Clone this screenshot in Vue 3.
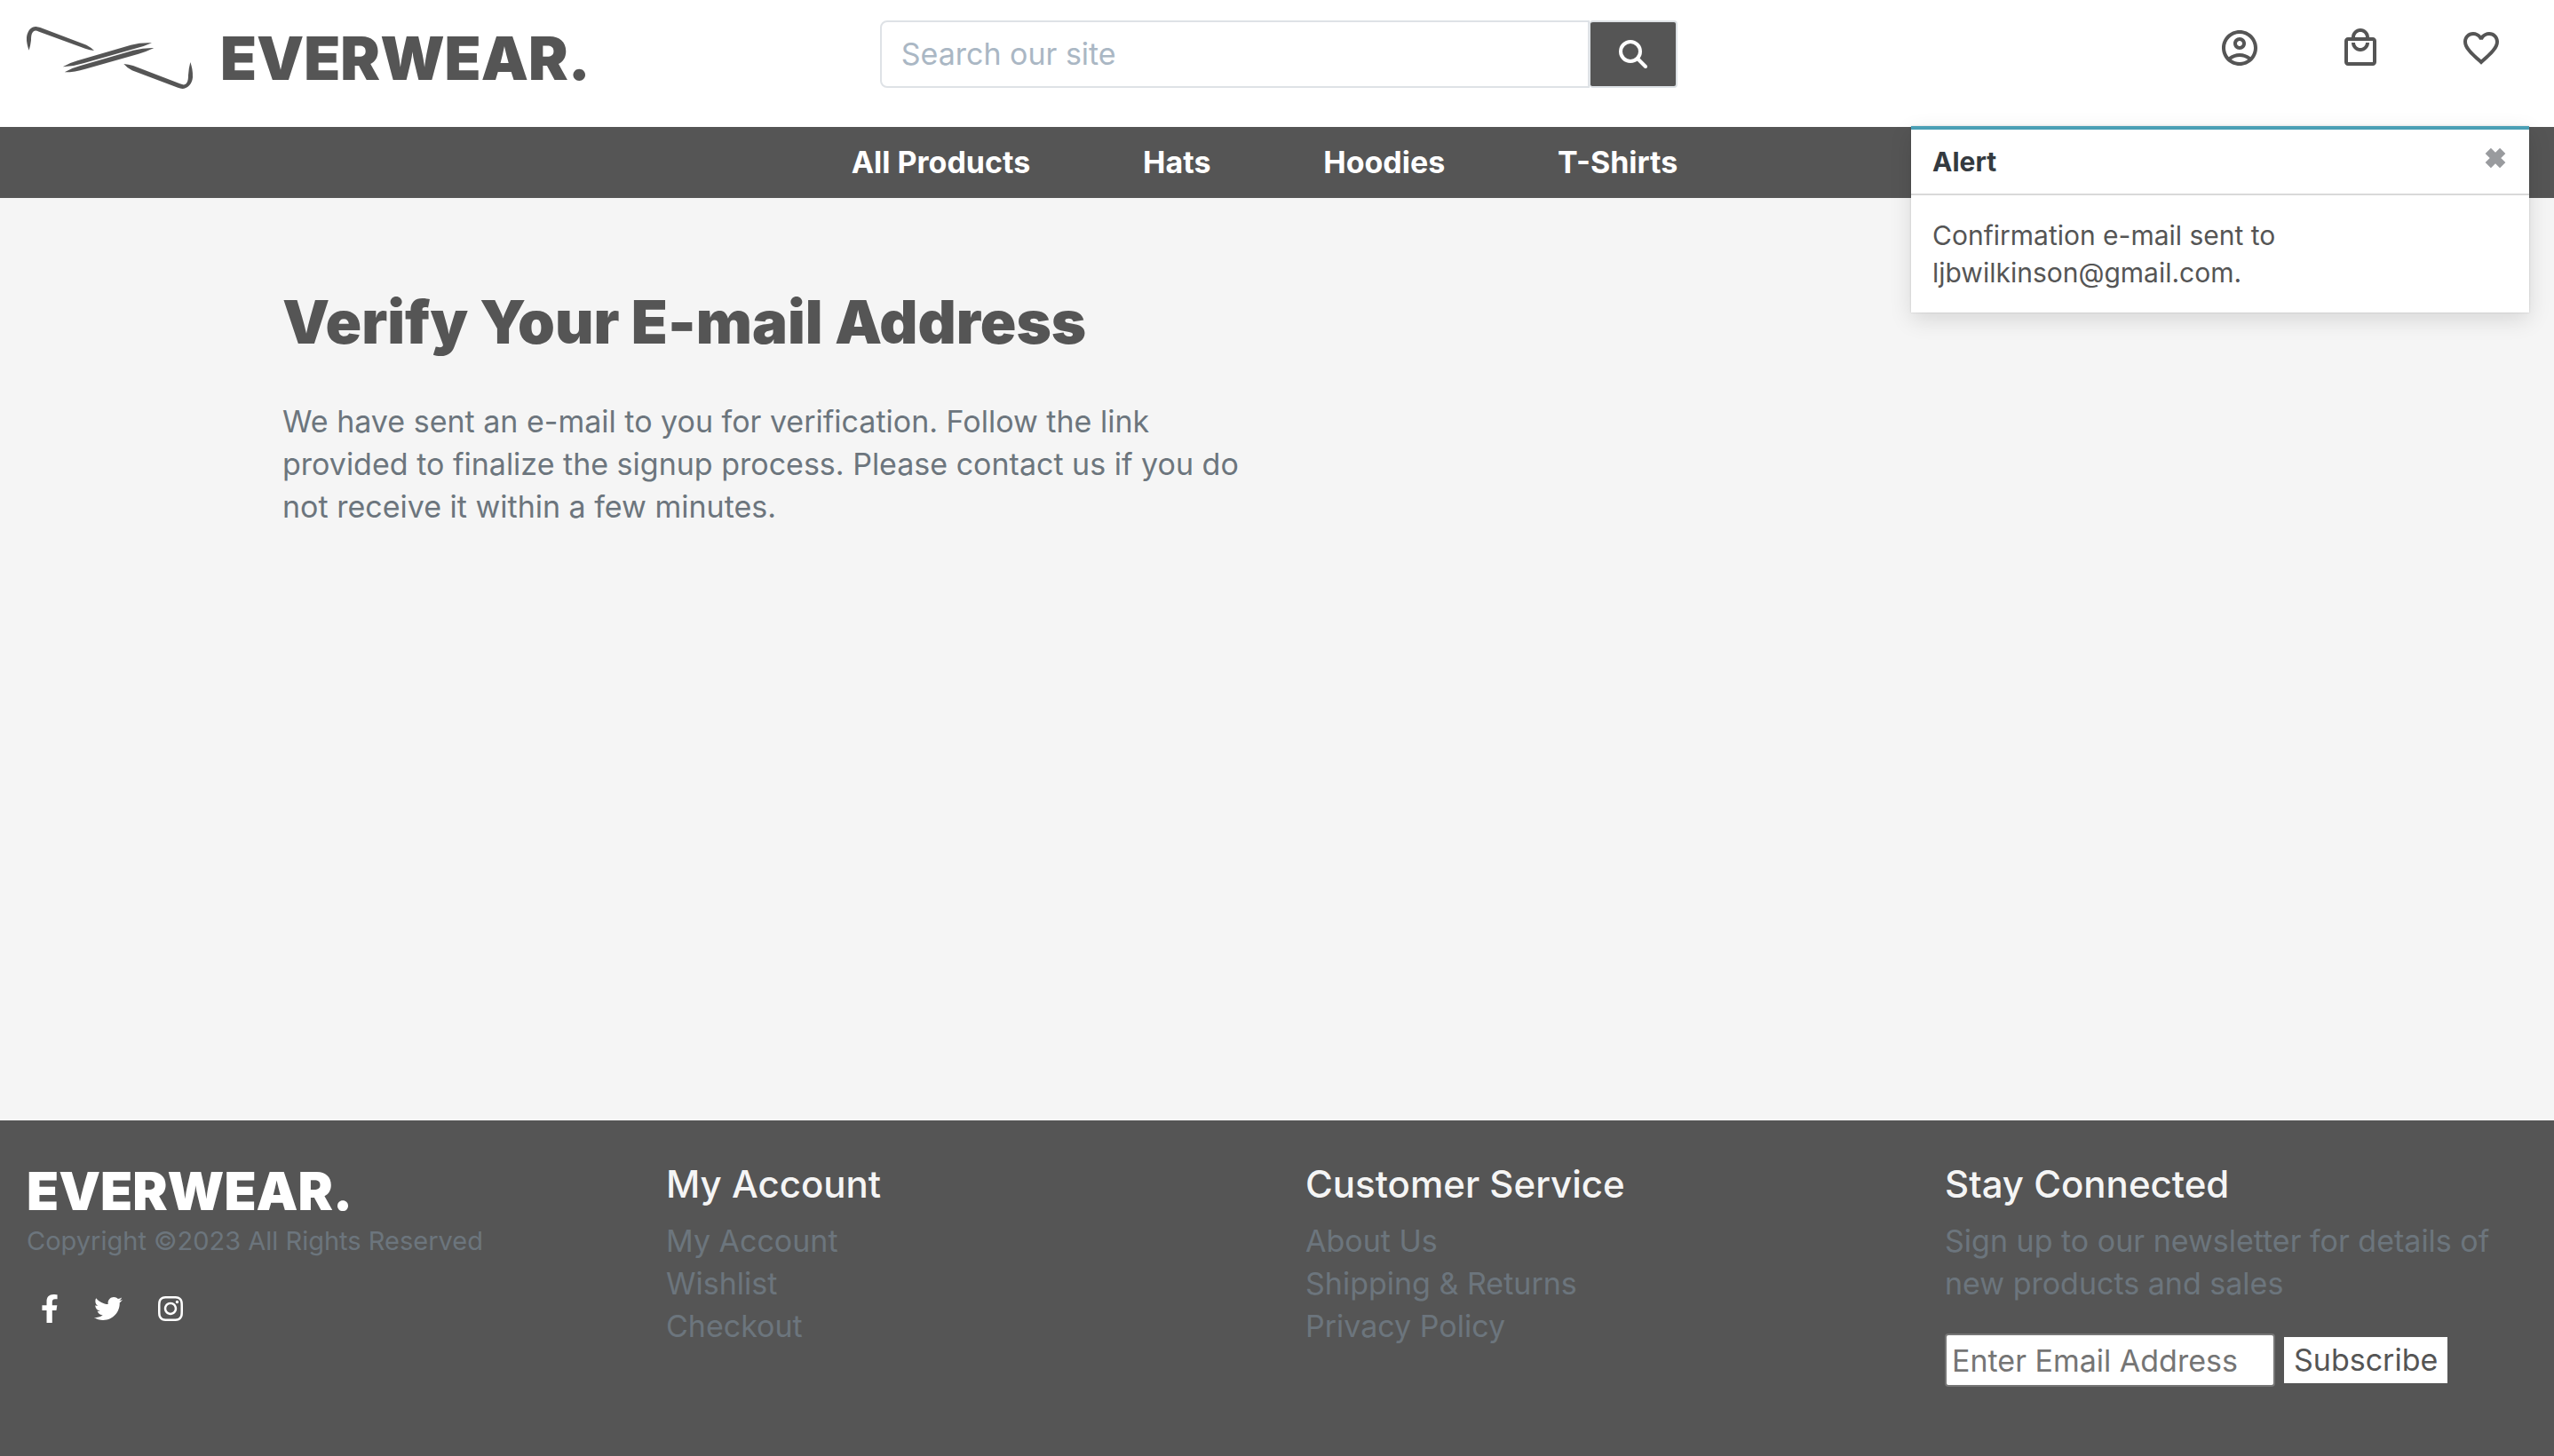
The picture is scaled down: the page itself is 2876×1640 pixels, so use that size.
<script setup>
import { ref } from 'vue'

const search = ref('')
const email = ref('')
const showAlert = ref(true)

const categories = ['All Products', 'Hats', 'Hoodies', 'T-Shirts']

const userLinks = [
  {
    label: 'My account',
    path: 'M12 2C6.48 2 2 6.48 2 12s4.48 10 10 10 10-4.48 10-10S17.52 2 12 2zM7.35 18.5C8.66 17.56 10.26 17 12 17s3.34.56 4.65 1.5c-1.31.94-2.91 1.5-4.65 1.5s-3.34-.56-4.65-1.5zm10.79-1.38C16.45 15.8 14.32 15 12 15s-4.45.8-6.14 2.12C4.7 15.73 4 13.95 4 12c0-4.42 3.58-8 8-8s8 3.58 8 8c0 1.95-.7 3.73-1.86 5.12zM12 6c-1.93 0-3.5 1.57-3.5 3.5S10.07 13 12 13s3.5-1.57 3.5-3.5S13.93 6 12 6zm0 5c-.83 0-1.5-.67-1.5-1.5S11.17 8 12 8s1.5.67 1.5 1.5S12.83 11 12 11z',
  },
  {
    label: 'Shopping bag',
    path: 'M19 6h-2c0-2.76-2.24-5-5-5S7 3.24 7 6H5c-1.1 0-1.99.9-1.99 2L3 20c0 1.1.9 2 2 2h14c1.1 0 2-.9 2-2V8c0-1.1-.9-2-2-2zm-7-3c1.66 0 3 1.34 3 3H9c0-1.66 1.34-3 3-3zm7 17H5V8h14v12zm-7-8c-1.66 0-3-1.34-3-3H7c0 2.76 2.24 5 5 5s5-2.24 5-5h-2c0 1.66-1.34 3-3 3z',
  },
  {
    label: 'Wishlist',
    path: 'M16.5 3c-1.74 0-3.41.81-4.5 2.09C10.91 3.81 9.24 3 7.5 3 4.42 3 2 5.42 2 8.5c0 3.78 3.4 6.86 8.55 11.54L12 21.35l1.45-1.32C18.6 15.36 22 12.28 22 8.5 22 5.42 19.58 3 16.5 3zm-4.4 15.55l-.1.1-.1-.1C7.14 14.24 4 11.39 4 8.5 4 6.5 5.5 5 7.5 5c1.54 0 3.04.99 3.57 2.36h1.87C13.46 5.99 14.96 5 16.5 5c2 0 3.5 1.5 3.5 3.5 0 2.89-3.14 5.74-7.9 10.05z',
  },
]

const linkGroups = [
  { title: 'My Account', links: ['My Account', 'Wishlist', 'Checkout'] },
  { title: 'Customer Service', links: ['About Us', 'Shipping & Returns', 'Privacy Policy'] },
]

const socials = [
  {
    label: 'Facebook',
    width: 320,
    path: 'M279.14 288l14.22-92.66h-88.91v-60.13c0-25.35 12.42-50.06 52.24-50.06h40.42V6.26S260.43 0 225.36 0c-73.22 0-121.08 44.38-121.08 124.72v70.62H22.89V288h81.39v224h100.17V288z',
  },
  {
    label: 'Twitter',
    width: 512,
    path: 'M459.37 151.716c.325 4.548.325 9.097.325 13.645 0 138.72-105.583 298.558-298.558 298.558-59.452 0-114.68-17.219-161.137-47.106 8.447.974 16.568 1.299 25.34 1.299 49.055 0 94.213-16.568 130.274-44.832-46.132-.975-84.792-31.188-98.112-72.772 6.498.974 12.995 1.624 19.818 1.624 9.421 0 18.843-1.3 27.614-3.573-48.081-9.747-84.143-51.98-84.143-102.985v-1.299c13.969 7.797 30.214 12.67 47.431 13.319-28.264-18.843-46.781-51.005-46.781-87.391 0-19.492 5.197-37.36 14.294-52.954 51.655 63.675 129.3 105.258 216.365 109.807-1.624-7.797-2.599-15.918-2.599-24.04 0-57.828 46.782-104.934 104.934-104.934 30.213 0 57.502 12.67 76.67 33.137 23.715-4.548 46.456-13.32 66.599-25.34-7.798 24.366-24.366 44.833-46.132 57.827 21.117-2.273 41.584-8.122 60.426-16.243-14.292 20.791-32.161 39.308-52.628 54.253z',
  },
  {
    label: 'Instagram',
    width: 448,
    path: 'M224.1 141c-63.6 0-114.9 51.3-114.9 114.9s51.3 114.9 114.9 114.9S339 319.5 339 255.9 287.7 141 224.1 141zm0 189.6c-41.1 0-74.7-33.5-74.7-74.7s33.5-74.7 74.7-74.7 74.7 33.5 74.7 74.7-33.6 74.7-74.7 74.7zm146.4-194.3c0 14.9-12 26.8-26.8 26.8-14.9 0-26.8-12-26.8-26.8s12-26.8 26.8-26.8 26.8 12 26.8 26.8zm76.1 27.2c-1.7-35.9-9.9-67.7-36.2-93.9-26.2-26.2-58-34.4-93.9-36.2-37-2.1-147.9-2.1-184.9 0-35.8 1.7-67.6 9.9-93.9 36.1s-34.4 58-36.2 93.9c-2.1 37-2.1 147.9 0 184.9 1.7 35.9 9.9 67.7 36.2 93.9s58 34.4 93.9 36.2c37 2.1 147.9 2.1 184.9 0 35.9-1.7 67.7-9.9 93.9-36.2 26.2-26.2 34.4-58 36.2-93.9 2.1-37 2.1-147.8 0-184.8zM398.8 388c-7.8 19.6-22.9 34.7-42.6 42.6-29.5 11.7-99.5 9-132.1 9s-102.7 2.6-132.1-9c-19.6-7.8-34.7-22.9-42.6-42.6-11.7-29.5-9-99.5-9-132.1s-2.6-102.7 9-132.1c7.8-19.6 22.9-34.7 42.6-42.6 29.5-11.7 99.5-9 132.1-9s102.7-2.6 132.1 9c19.6 7.8 34.7 22.9 42.6 42.6 11.7 29.5 9 99.5 9 132.1s2.7 102.7-9 132.1z',
  },
]
</script>

<template>
  <div class="page">
    <header class="header">
      <a class="brand" href="#">
        <svg class="brand-mark" viewBox="0 0 630 276" aria-hidden="true">
          <path d="M38 110C33 96 29 82 30 66C33 42 47 29 62 30Q69 31 76 33L232 92Q246 99 258 111Q243 110 228 104L72 47Q63 43 57 44C47 48 45 60 45 76Q43 94 38 110Z" />
          <path d="M583 150C588 164 592 180 591 202C589 226 572 240 556 240Q549 239 541 236L386 178Q370 170 358 156Q374 157 390 162L548 223Q558 227 563 226C574 222 576 210 576 194Q578 168 583 150Z" />
          <path d="M152 166Q176 152 202 145L382 92Q418 83 453 85Q429 96 401 103L222 154Q188 165 152 166Z" />
          <path d="M158 184Q182 170 209 163L390 110Q426 101 460 102Q436 114 408 122L228 173Q194 184 158 184Z" />
        </svg>
        <span>EVERWEAR.</span>
      </a>
      <form class="search" role="search" @submit.prevent>
        <input v-model="search" type="search" placeholder="Search our site" aria-label="Search our site" />
        <button type="submit" aria-label="Search">
          <svg viewBox="0 0 32 32" aria-hidden="true">
            <circle cx="13" cy="13" r="11" />
            <path d="M21 21L30 30" />
          </svg>
        </button>
      </form>
      <div class="user-links">
        <a v-for="item in userLinks" :key="item.label" href="#" :aria-label="item.label">
          <svg viewBox="0 0 24 24" aria-hidden="true"><path :d="item.path" /></svg>
        </a>
      </div>
    </header>

    <nav class="nav">
      <div class="nav-links">
        <a v-for="name in categories" :key="name" href="#">{{ name }}</a>
      </div>
    </nav>

    <section v-if="showAlert" class="toast" role="alert">
      <div class="toast-head">
        <strong>Alert</strong>
        <button type="button" aria-label="Close" @click="showAlert = false">
          <svg viewBox="1 1 19 19" aria-hidden="true"><path d="M4 4L17 17M17 4L4 17" /></svg>
        </button>
      </div>
      <p>Confirmation e-mail sent to<br />ljbwilkinson@gmail.com.</p>
    </section>

    <main class="main">
      <h1>Verify Your E-mail Address</h1>
      <p>
        We have sent an e-mail to you for verification. Follow the link provided to finalize the signup
        process. Please contact us if you do not receive it within a few minutes.
      </p>
    </main>

    <footer class="footer">
      <div>
        <a class="footer-brand" href="#">EVERWEAR.</a>
        <p class="copyright">Copyright ©2023 All Rights Reserved</p>
        <div class="socials">
          <a v-for="s in socials" :key="s.label" href="#" :aria-label="s.label">
            <svg :viewBox="`0 0 ${s.width} 512`" aria-hidden="true"><path :d="s.path" /></svg>
          </a>
        </div>
      </div>
      <div v-for="group in linkGroups" :key="group.title">
        <h2>{{ group.title }}</h2>
        <ul>
          <li v-for="link in group.links" :key="link"><a href="#">{{ link }}</a></li>
        </ul>
      </div>
      <div>
        <h2>Stay Connected</h2>
        <p>Sign up to our newsletter for details of new products and sales</p>
        <form class="newsletter" @submit.prevent>
          <input v-model="email" type="email" placeholder="Enter Email Address" aria-label="Email address" />
          <button type="submit">Subscribe</button>
        </form>
      </div>
    </footer>
  </div>
</template>

<style>
body {
  margin: 0;
}
</style>

<style scoped>
* {
  box-sizing: border-box;
}

.page {
  position: relative;
  display: flex;
  flex-direction: column;
  min-height: 100vh;
  background: #f5f5f5;
  color: #555;
  font-family: Inter, "Open Sans", sans-serif;
  font-size: 34px;
  line-height: 48px;
}

a {
  color: inherit;
  text-decoration: none;
}

h1,
h2,
p,
ul {
  margin: 0;
  padding: 0;
}

svg {
  display: block;
  fill: currentColor;
}

button,
input {
  font: inherit;
}

.header {
  display: grid;
  grid-template-columns: repeat(3, 1fr);
  align-items: start;
  min-height: 143px;
  background: #fff;
}

.brand {
  display: flex;
  align-items: center;
  gap: 18px;
  padding: 20px 0 0 20px;
  font-size: 67px;
  font-weight: 900;
}

.brand-mark {
  width: 210px;
  height: 92px;
}

.search {
  display: flex;
  height: 76px;
  margin: 23px 28px 0 32px;
}

.search input {
  flex: 1;
  min-width: 0;
  padding: 0 22px;
  border: 2px solid #dee2e6;
  border-radius: 8px 0 0 8px;
  background: #fff;
  color: #555;
  outline: none;
  appearance: none;
}

.search input::placeholder {
  color: #aab7c4;
}

.search button {
  display: grid;
  place-items: center;
  width: 99px;
  padding: 0;
  border: 2px solid #dee2e6;
  border-left-width: 1px;
  border-radius: 4px;
  background: #555;
  color: #fff;
}

.search svg {
  width: 32px;
  height: 32px;
  fill: none;
  stroke: currentColor;
  stroke-width: 4;
  stroke-linecap: round;
}

.user-links {
  display: flex;
  justify-content: flex-end;
  gap: 88px;
  padding: 30px 58px 0 0;
}

.user-links svg {
  width: 48px;
  height: 48px;
}

.nav {
  display: grid;
  grid-template-columns: repeat(3, 1fr);
  padding: 16px 0;
  background: #555;
  color: #fff;
  font-weight: 700;
}

.nav-links {
  grid-column: 2;
  display: flex;
  justify-content: space-between;
  padding-right: 28px;
}

.toast {
  position: absolute;
  top: 142px;
  right: 28px;
  width: 696px;
  border-top: 4px solid #4a9fb5;
  background: #fff;
  box-shadow: 0 8px 24px rgba(0, 0, 0, 0.12), 0 0 2px rgba(0, 0, 0, 0.16);
  font-size: 30px;
  line-height: 42px;
}

.toast-head {
  display: flex;
  justify-content: space-between;
  align-items: flex-start;
  padding: 15px 24px;
  border-bottom: 2px solid #d9d9d9;
  color: #343a40;
}

.toast-head button {
  padding: 5px 2px;
  border: 0;
  background: none;
  color: #999b9e;
}

.toast-head svg {
  width: 24px;
  height: 24px;
  stroke: currentColor;
  stroke-width: 7;
}

.toast p {
  padding: 24px;
}

.main {
  flex: 1;
  padding: 100px 318px 48px;
}

.main h1 {
  font-size: 67px;
  font-weight: 900;
  line-height: 80px;
}

.main p {
  max-width: 1100px;
  margin-top: 48px;
  color: #6c757d;
}

.footer {
  display: grid;
  grid-template-columns: repeat(4, 1fr);
  gap: 64px;
  padding: 48px 30px 78px;
  background: #555;
  color: #6c757d;
}

.footer h2 {
  margin-bottom: 16px;
  color: #f5f5f5;
  font-size: 42px;
  font-weight: 500;
}

.footer ul {
  list-style: none;
}

.footer-brand {
  display: block;
  color: #fff;
  font-size: 59px;
  font-weight: 900;
  line-height: 64px;
}

.copyright {
  font-size: 29px;
}

.socials {
  display: flex;
  gap: 40px;
  margin-top: 36px;
  padding-left: 16px;
  color: #fff;
}

.socials svg {
  height: 32px;
}

.newsletter {
  display: flex;
  align-items: center;
  gap: 10px;
  margin-top: 32px;
}

.newsletter input {
  width: 372px;
  height: 60px;
  padding: 0 6px;
  border: 2px solid #767676;
  border-radius: 4px;
  background: #fff;
  color: #555;
}

.newsletter input::placeholder {
  color: #757575;
}

.newsletter button {
  height: 52px;
  padding: 0 11px;
  border: 0;
  background: #fff;
  color: #555;
}
</style>
